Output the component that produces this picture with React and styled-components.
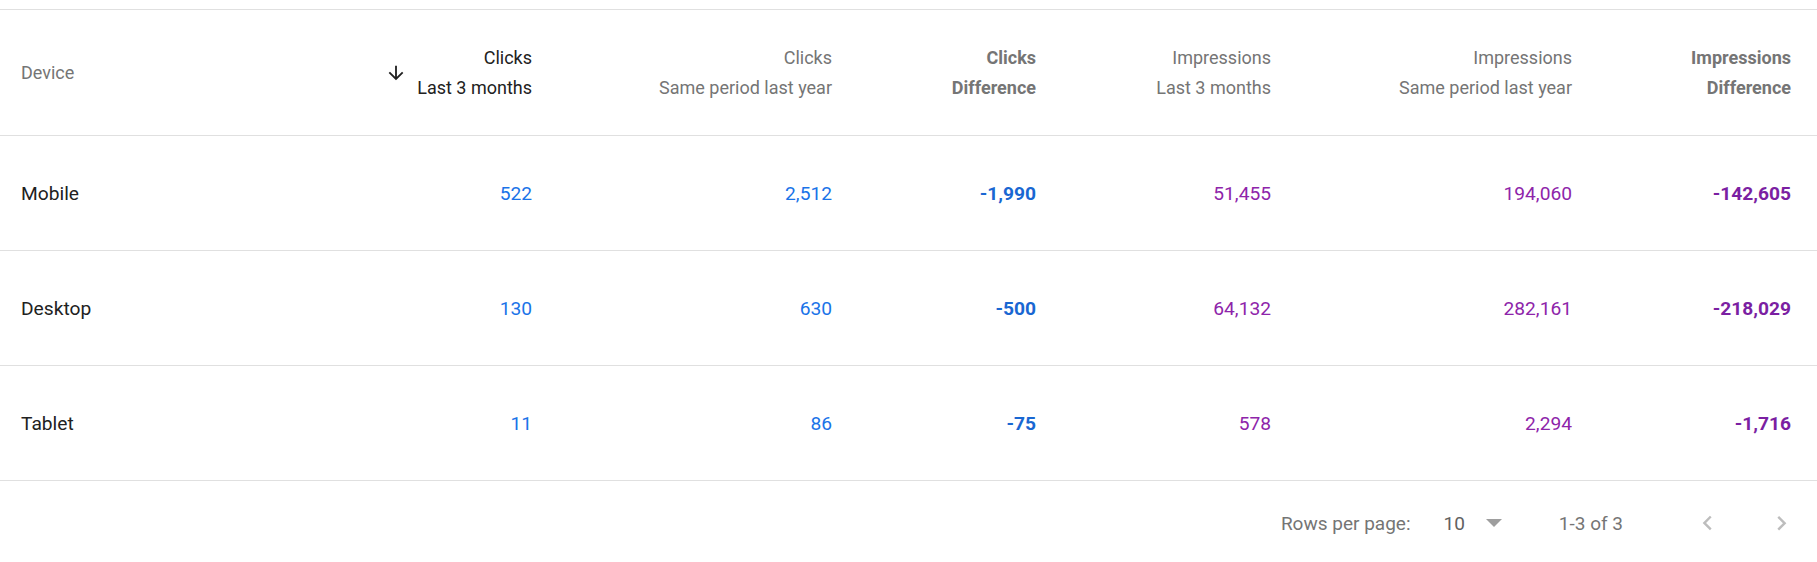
import React from "react";
import styled, { createGlobalStyle } from "styled-components";

const GlobalStyle = createGlobalStyle`
  html, body {
    margin: 0;
    padding: 0;
    background: #ffffff;
    font-family: Roboto, "Liberation Sans", Arial, sans-serif;
  }
`;

const rows = [
  { device: "Mobile", clicks: "522", clicksPrev: "2,512", clicksDiff: "-1,990", impr: "51,455", imprPrev: "194,060", imprDiff: "-142,605" },
  { device: "Desktop", clicks: "130", clicksPrev: "630", clicksDiff: "-500", impr: "64,132", imprPrev: "282,161", imprDiff: "-218,029" },
  { device: "Tablet", clicks: "11", clicksPrev: "86", clicksDiff: "-75", impr: "578", imprPrev: "2,294", imprDiff: "-1,716" },
];

const ArrowDown = () => (
  <svg width="22" height="22" viewBox="0 0 24 24" fill="#212121">
    <path d="M20 12l-1.41-1.41L13 16.17V4h-2v12.17l-5.58-5.59L4 12l8 8 8-8z" />
  </svg>
);

const Chevron = ({ dir }) => (
  <svg width="29" height="29" viewBox="0 0 24 24" fill="#bdbdbd">
    {dir === "left" ? (
      <path d="M15.41 16.09l-4.58-4.59 4.58-4.59L14 5.5l-6 6 6 6z" />
    ) : (
      <path d="M8.59 16.34l4.58-4.59-4.58-4.59L10 5.75l6 6-6 6z" />
    )}
  </svg>
);

const App = () => {
  return (
    <>
      <GlobalStyle />
      <Page>
        <Table>
          <HeaderRow>
            <HeadCell first>
              <HeadText>Device</HeadText>
            </HeadCell>
            <HeadCell>
              <SortIcon>
                <ArrowDown />
              </SortIcon>
              <HeadText active>
                <div>Clicks</div>
                <div>Last 3 months</div>
              </HeadText>
            </HeadCell>
            <HeadCell>
              <HeadText>
                <div>Clicks</div>
                <div>Same period last year</div>
              </HeadText>
            </HeadCell>
            <HeadCell>
              <HeadText bold>
                <div>Clicks</div>
                <div>Difference</div>
              </HeadText>
            </HeadCell>
            <HeadCell>
              <HeadText>
                <div>Impressions</div>
                <div>Last 3 months</div>
              </HeadText>
            </HeadCell>
            <HeadCell>
              <HeadText>
                <div>Impressions</div>
                <div>Same period last year</div>
              </HeadText>
            </HeadCell>
            <HeadCell>
              <HeadText bold>
                <div>Impressions</div>
                <div>Difference</div>
              </HeadText>
            </HeadCell>
          </HeaderRow>
          {rows.map((r) => (
            <BodyRow key={r.device}>
              <Cell first>{r.device}</Cell>
              <Cell tone="blue">{r.clicks}</Cell>
              <Cell tone="blue">{r.clicksPrev}</Cell>
              <Cell tone="blueStrong" bold>
                {r.clicksDiff}
              </Cell>
              <Cell tone="purple">{r.impr}</Cell>
              <Cell tone="purple">{r.imprPrev}</Cell>
              <Cell tone="purpleStrong" bold>
                {r.imprDiff}
              </Cell>
            </BodyRow>
          ))}
        </Table>
        <Footer>
          <FooterLabel>Rows per page:</FooterLabel>
          <Select>
            <SelectValue>10</SelectValue>
            <Caret />
          </Select>
          <FooterLabel>1-3 of 3</FooterLabel>
          <PageButtons>
            <PageButton>
              <Chevron dir="left" />
            </PageButton>
            <PageButton>
              <Chevron dir="right" />
            </PageButton>
          </PageButtons>
        </Footer>
      </Page>
    </>
  );
};

export default App;

const toneColors = {
  blue: "#1a73e8",
  blueStrong: "#1967d2",
  purple: "#8e24aa",
  purpleStrong: "#7b1fa2",
};

const Page = styled.div`
  padding-top: 9px;
  width: 100%;
`;

const Table = styled.div`
  border-top: 1px solid #e0e0e0;
`;

const gridCols = `1fr 258px 300px 204px 235px 301px 219px`;

const HeaderRow = styled.div`
  display: grid;
  grid-template-columns: ${gridCols};
  height: 126px;
  box-sizing: border-box;
  border-bottom: 1px solid #e0e0e0;
`;

const HeadCell = styled.div`
  display: flex;
  align-items: center;
  justify-content: ${(p) => (p.first ? "flex-start" : "flex-end")};
  padding: ${(p) => (p.first ? "0 0 0 21px" : "0 26px 0 0")};
`;

const SortIcon = styled.span`
  display: flex;
  margin-right: 10px;
`;

const HeadText = styled.div`
  font-size: 18px;
  line-height: 30px;
  text-align: right;
  color: ${(p) => (p.active ? "#212121" : "#757575")};
  font-weight: ${(p) => (p.bold ? 700 : 400)};
  white-space: nowrap;
`;

const BodyRow = styled.div`
  display: grid;
  grid-template-columns: ${gridCols};
  height: 115px;
  box-sizing: border-box;
  border-bottom: 1px solid #e0e0e0;
`;

const Cell = styled.div`
  display: flex;
  align-items: center;
  justify-content: ${(p) => (p.first ? "flex-start" : "flex-end")};
  padding: ${(p) => (p.first ? "0 0 0 21px" : "0 26px 0 0")};
  font-size: 19.2px;
  font-weight: ${(p) => (p.bold ? 700 : 400)};
  color: ${(p) => (p.tone ? toneColors[p.tone] : "#212121")};
  white-space: nowrap;
`;

const Footer = styled.div`
  display: flex;
  align-items: center;
  justify-content: flex-end;
  height: 84px;
  padding-right: 7px;
`;

const FooterLabel = styled.span`
  font-size: 19px;
  color: #757575;
  white-space: nowrap;
`;

const Select = styled.div`
  display: flex;
  align-items: center;
  margin: 0 57px 0 33px;
`;

const SelectValue = styled.span`
  font-size: 19px;
  color: #616161;
  margin-right: 21px;
`;

const Caret = styled.span`
  width: 0;
  height: 0;
  border-left: 8.5px solid transparent;
  border-right: 8.5px solid transparent;
  border-top: 8.5px solid #9e9e9e;
`;

const PageButtons = styled.div`
  display: flex;
  gap: 16px;
  margin-left: 55px;
`;

const PageButton = styled.div`
  width: 58px;
  height: 58px;
  display: flex;
  align-items: center;
  justify-content: center;
`;
